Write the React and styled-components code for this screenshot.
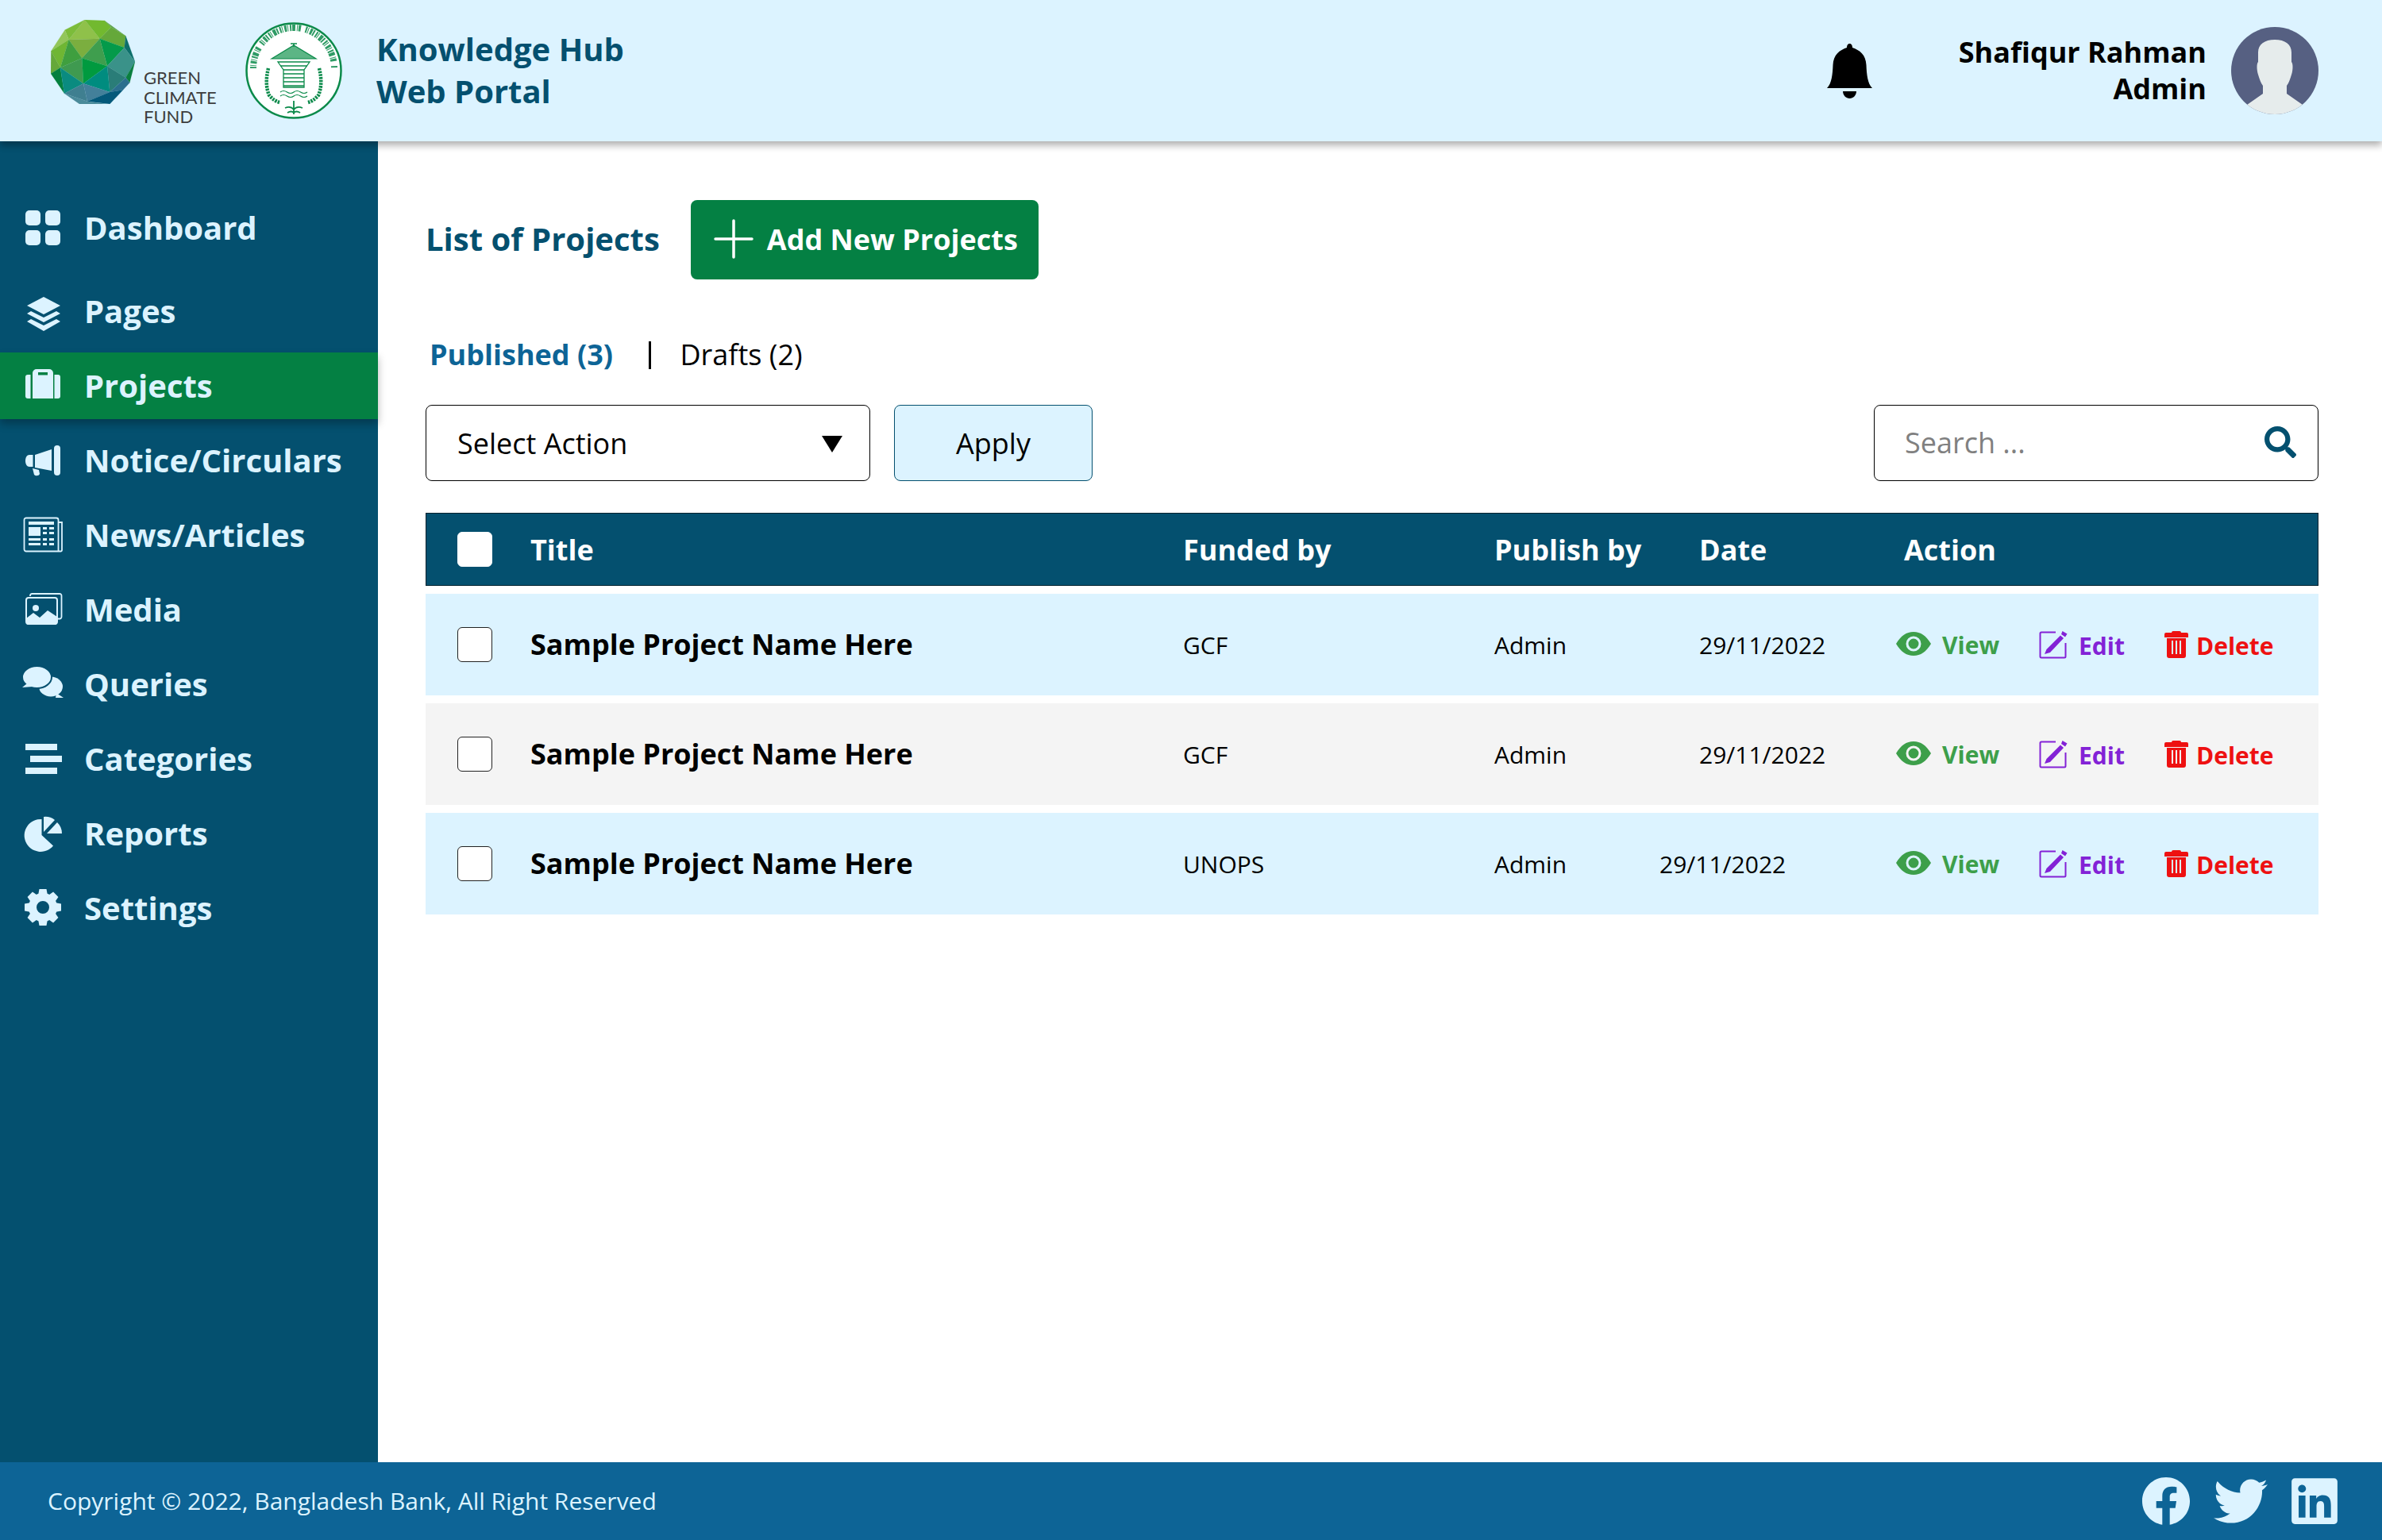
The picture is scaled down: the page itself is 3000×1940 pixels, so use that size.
import React from "react";
import styled, { createGlobalStyle } from "styled-components";
import { FaFacebook, FaTwitter, FaLinkedin, FaSearch } from "react-icons/fa";

const NAVY = "#04506f";
const PALE = "#dcf3ff";
const GREEN = "#048043";

const GlobalStyle = createGlobalStyle`
	html, body {
		margin: 0;
		padding: 0;
		background: #fff;
		font-family: "Open Sans", "Noto Sans", sans-serif;
	}
	* {
		box-sizing: border-box;
	}
`;

const Page = styled.div`
	display: grid;
	grid-template-columns: 476px 1fr;
	grid-template-rows: 178px 1fr 98px;
	width: 3000px;
	height: 1940px;
	overflow: hidden;
`;

const Header = styled.header`
	grid-column: 1 / 3;
	display: flex;
	align-items: center;
	padding: 0 80px 0 0;
	background: ${PALE};
	box-shadow: 0 5px 9px rgba(0, 0, 0, 0.32);
	position: relative;
	z-index: 3;
`;

const Glyph = styled.svg`
	flex: none;
`;

const GcfLogo = styled.div`
	display: flex;
	width: 241px;
	height: 178px;
	margin-left: 64px;
	padding-top: 25px;
`;

const GcfText = styled.div`
	margin: 61px 0 0 11px;
	font-family: Lato, sans-serif;
	font-size: 22px;
	line-height: 24.5px;
	color: #3d3d3d;
`;

const PortalName = styled.div`
	margin: -2px 0 0 43px;
	font-size: 40px;
	font-weight: 700;
	line-height: 53px;
	color: ${NAVY};
`;

const Emblem = styled.svg`
	width: 122px;
	height: 122px;
	margin-left: 4px;
	flex: none;
`;

const UserArea = styled.div`
	display: flex;
	align-items: center;
	margin-left: auto;
`;

const UserText = styled.div`
	margin: 0 31px 0 109px;
	text-align: right;
	font-size: 36px;
	font-weight: 700;
	line-height: 46px;
	color: #000;
`;

const Sidebar = styled.nav`
	display: flex;
	flex-direction: column;
	gap: 10px;
	padding-top: 66px;
	background: ${NAVY};
`;

const NavItem = styled.div`
	display: flex;
	align-items: center;
	gap: 26px;
	height: 84px;
	padding: 0 0 2px 28px;
	font-size: 40px;
	font-weight: 700;
	color: ${PALE};
	background: ${(p) => (p.$active ? GREEN : "transparent")};
	box-shadow: ${(p) => (p.$active ? "0 6px 10px rgba(0, 0, 0, 0.28)" : "none")};
	&:first-child {
		margin-bottom: 12px;
		padding-bottom: 0;
	}
`;

const NavIcon = styled.svg`
	width: 52px;
	height: 52px;
	flex: none;
	fill: ${PALE};
`;

const Main = styled.main`
	padding: 74px 80px 0 60px;
`;

const TitleRow = styled.div`
	display: flex;
	align-items: center;
	gap: 39px;
`;

const Title = styled.h1`
	margin: -3px 0 0;
	font-size: 40px;
	font-weight: 700;
	color: ${NAVY};
`;

const AddButton = styled.button`
	display: flex;
	align-items: center;
	gap: 17px;
	width: 438px;
	height: 100px;
	padding: 0 0 2px 29px;
	border: 0;
	border-radius: 8px;
	background: ${GREEN};
	color: #fff;
	font-family: inherit;
	font-size: 36px;
	font-weight: 700;
`;

const Tabs = styled.div`
	display: flex;
	align-items: center;
	height: 36px;
	margin: 76px 0 46px 5px;
	font-size: 36px;
`;

const Tab = styled.span`
	color: ${(p) => (p.$active ? "#0d6496" : "#000")};
	font-weight: ${(p) => (p.$active ? 700 : 400)};
`;

const TabDivider = styled.i`
	width: 3.5px;
	height: 35px;
	margin: 2px 36px 0 45px;
	background: #000;
`;

const Toolbar = styled.div`
	display: flex;
	align-items: stretch;
	height: 96px;
	margin-bottom: 40px;
`;

const SelectBox = styled.div`
	display: flex;
	align-items: center;
	justify-content: space-between;
	width: 560px;
	padding: 0 34px 0 39px;
	border: 1px solid #000;
	border-radius: 8px;
	font-size: 36px;
	color: #000;
`;

const Caret = styled.i`
	width: 0;
	height: 0;
	margin-top: 2px;
	border-left: 13px solid transparent;
	border-right: 13px solid transparent;
	border-top: 21px solid #000;
`;

const ApplyButton = styled.button`
	width: 250px;
	margin-left: 30px;
	border: 1px solid ${NAVY};
	border-radius: 8px;
	background: ${PALE};
	color: #000;
	font-family: inherit;
	font-size: 36px;
`;

const SearchBox = styled.div`
	display: flex;
	align-items: center;
	justify-content: space-between;
	width: 560px;
	margin-left: auto;
	padding: 0 27px 2px 38px;
	border: 1px solid #000;
	border-radius: 8px;
	font-size: 36px;
	color: #808080;
	svg {
		width: 40px;
		height: 40px;
		color: ${NAVY};
	}
`;

const Columns = styled.div`
	display: grid;
	grid-template-columns: 132px 822px 392px 258px 248px 1fr;
	align-items: center;
`;

const HeadRow = styled(Columns)`
	height: 92px;
	margin-bottom: 10px;
	background: ${NAVY};
	box-shadow: inset 0 0 0 1px #01212e;
	color: #fff;
	font-size: 36px;
	font-weight: 700;
`;

const Row = styled(Columns)`
	height: 128px;
	margin-bottom: 10px;
	background: ${(p) => p.$bg};
	color: #000;
	font-size: 30px;
`;

const CheckCell = styled.div`
	padding-left: 40px;
`;

const Check = styled.span`
	display: block;
	width: 44px;
	height: 44px;
	border: 1.5px solid ${(p) => (p.$solid ? "#fff" : "#222")};
	border-radius: 6px;
	background: #fff;
`;

const RowTitle = styled.div`
	margin-top: -2px;
	font-size: 36px;
	font-weight: 700;
`;

const DateCell = styled.div`
	margin-left: ${(p) => (p.$shift ? "-50px" : "0")};
`;

const ActionHead = styled.div`
	margin-left: 10px;
`;

const Actions = styled.div`
	display: grid;
	grid-template-columns: 180px 158px auto;
`;

const ActionLink = styled.div`
	display: flex;
	align-items: center;
	gap: ${(p) => p.$gap}px;
	margin-top: ${(p) => p.$lift}px;
	color: ${(p) => p.$color};
	font-size: 30px;
	font-weight: 700;
	svg {
		flex: none;
		margin-top: -3px;
		fill: ${(p) => p.$color};
	}
`;

const Footer = styled.footer`
	grid-column: 1 / 3;
	display: flex;
	align-items: center;
	padding: 0 52px 0 60px;
	background: #0d6496;
	color: ${PALE};
	font-size: 30px;
`;

const Copyright = styled.span`
	margin-top: -2px;
`;

const Social = styled.div`
	display: flex;
	align-items: center;
	gap: 29px;
	margin-left: auto;
	font-size: 62px;
	line-height: 0;
	svg:nth-child(2) {
		font-size: 68px;
	}
	svg:nth-child(3) {
		font-size: 66px;
		margin-left: -3px;
	}
`;

const facets = [
	["205,47 262,118 145,122", "#8fc14a"],
	["130,85 205,47 145,122", "#7cbc3a"],
	["130,85 145,122 78,165", "#93c65a"],
	["205,47 280,50 305,75 262,118", "#72b92f"],
	["280,50 360,108 305,75", "#5fa34d"],
	["305,75 360,108 355,152 262,118", "#65a83a"],
	["145,122 262,118 195,192", "#7bae3f"],
	["145,122 78,165 113,228", "#6fb633"],
	["145,122 195,192 113,228", "#3f9f3f"],
	["262,118 355,152 290,222", "#049a4a"],
	["262,118 290,222 195,192", "#3f9e4e"],
	["360,108 395,205 355,152", "#0d6f6b"],
	["355,152 395,205 360,265 290,222", "#3a9289"],
	["78,165 113,228 77,250", "#65a83a"],
	["77,250 113,228 128,325", "#04803f"],
	["113,228 195,192 200,288", "#3f9a50"],
	["195,192 290,222 200,288", "#009a3f"],
	["395,205 375,285 360,265", "#0a7f3f"],
	["290,222 360,265 300,320", "#2a7d78"],
	["200,288 290,222 300,320", "#008c7f"],
	["113,228 200,288 128,325", "#0a8b80"],
	["128,325 200,288 215,355", "#3f7f90"],
	["200,288 300,320 215,355", "#43809a"],
	["360,265 375,285 350,312 300,320", "#2b6f8e"],
	["215,355 300,320 350,312 300,365", "#04597a"],
	["128,325 215,355 290,365 185,365", "#4a8a9a"],
];

const GcfMark = () => (
	<Glyph width="106" height="106" viewBox="77 47 318 318">
		{facets.map(([points, color]) => (
			<polygon key={points} points={points} fill={color} stroke={color} strokeWidth="0.5" />
		))}
	</Glyph>
);

const BankEmblem = () => (
	<Emblem viewBox="0 0 122 122">
		<circle cx="61" cy="61" r="59.5" fill="#fff" stroke="#0b8a4a" strokeWidth="2.5" />
		<path d="M10 58 A51 51 0 0 1 112 58" fill="none" stroke="#0b8a4a" strokeWidth="8" strokeDasharray="2 1 1 2 3 1 1 2 2 1 4 2 1 1 3 6 2 1 1 2 3 1 2 2 2 1 1 2 4 1 2 2" opacity="0.85" />
		<g fill="none" stroke="#0b8a4a">
			<path d="M33 46 L61 29 L89 46 Z" strokeWidth="1.2" fill="#5cb585" />
			<path d="M57 27 h8 M61 27 v4" strokeWidth="1.6" />
			<path d="M41 50 H81 L74 60 V82 H48 V60 Z" strokeWidth="1.3" />
			<path d="M44 55 H78 M48 60 H74 M48 65 H74 M48 70 H74 M48 75 H74 M48 80 H74" strokeWidth="1.7" />
			<path d="M44 88 q4 -3 8.500 0 t8.500 0 t8.500 0 t8.500 0 M44 93 q4 -3 8.500 0 t8.500 0 t8.500 0 t8.500 0" strokeWidth="1.200" />
			<path d="M29 58 q-5 20 1 34 q6 7 13 9 M93 58 q5 20 -1 34 q-6 7 -13 9" strokeWidth="4.500" strokeDasharray="2.500 1.200" />
			<path d="M61 99 v17 M50 108 q7 -3 11 2 q4 -5 11 -2 M53 114 q5 -3 8 0 q3 -3 8 0" strokeWidth="1.800" />
		</g>
	</Emblem>
);

const Bell = () => (
	<Glyph width="57" height="69" viewBox="0 0 57 69" fill="#000">
		<path d="M28.5 0 C31 0 32 2.5 32 5 C41 8 49 14 49.500 27 C50 39 51 50 57 56 H0 C6 50 7 39 7.500 27 C8 14 16 8 25 5 C25 2.500 26 0 28.500 0 Z" />
		<path d="M20 60 H37 C37 65 33 69 28.500 69 C24 69 20 65 20 60 Z" />
	</Glyph>
);

const Avatar = () => (
	<Glyph width="110" height="110" viewBox="0 0 110 110">
		<clipPath id="avatar-clip">
			<circle cx="55" cy="55" r="55" />
		</clipPath>
		<g clipPath="url(#avatar-clip)">
			<rect width="110" height="110" fill="#566082" />
			<path d="M34 44 V32 C34 22 42 16 55 16 C68 16 76 22 76 32 V44 C78 46 78 54 76 60 C74 66 73 70 70 74 V84 L90 98 V110 H20 V98 L40 84 V74 C37 70 36 66 34 60 C32 54 32 46 34 44 Z" fill="#e6ecec" />
		</g>
	</Glyph>
);

const IconDashboard = () => (
	<NavIcon viewBox="0 0 52 52">
		<rect x="4" y="5" width="19" height="19" rx="5" />
		<rect x="29" y="5" width="19" height="19" rx="5" />
		<rect x="4" y="30" width="19" height="19" rx="5" />
		<rect x="29" y="30" width="19" height="19" rx="5" />
	</NavIcon>
);

const IconPages = () => (
	<NavIcon viewBox="0 0 52 52">
		<path d="M27 9 L48 20 L27 31 L6 20 Z" />
		<path d="M6 30 L11 27 L27 35 L43 27 L48 30 L27 41 Z" />
		<path d="M6 40 L11 37 L27 45 L43 37 L48 40 L27 52 Z" />
	</NavIcon>
);

const IconProjects = () => (
	<NavIcon viewBox="0 0 52 52">
		<path d="M4 16 a3 3 0 0 1 3 -3 h3.500 v30 h-3.500 a3 3 0 0 1 -3 -3 Z" />
		<path d="M40.500 13 h4.500 a3 3 0 0 1 3 3 v24 a3 3 0 0 1 -3 3 h-4.500 Z" />
		<path fillRule="evenodd" d="M13 11 a5 5 0 0 1 5 -5 h16 a5 5 0 0 1 5 5 v32 h-26 Z M20 10 v3.500 h12 v-3.500 Z" />
	</NavIcon>
);

const IconNotice = () => (
	<NavIcon viewBox="0 0 52 52">
		<rect x="40" y="8" width="8" height="38" rx="4" />
		<path d="M37 13 V40 L16 36 V20 Z" />
		<path d="M13.500 20 V35 H9 C6 35 4 32 4 27.500 C4 23 6 20 9 20 Z" />
		<path d="M13 37 L21 39 L22 44 C21 46.500 17 47 15 45 Z" />
	</NavIcon>
);

const IconNews = () => (
	<NavIcon viewBox="0 0 52 52">
		<path d="M46 11 H50 V46 A1.500 1.500 0 0 1 48.500 47.500 H5 A2.500 2.500 0 0 1 2.500 45 V8 A2.500 2.500 0 0 1 5 5.500 H43 A2.500 2.500 0 0 1 45.500 8 V47" fill="none" stroke="#dcf3ff" strokeWidth="1.800" />
		<rect x="8" y="10" width="32" height="4" />
		<rect x="8" y="17" width="15" height="11" />
		<path d="M26 17 h5 v3 h-5 z M34 17 h6 v3 h-6 z M26 23 h5 v3 h-5 z M34 23 h6 v3 h-6 z M8 31 h15 v3 h-15 z M26 31 h5 v3 h-5 z M34 31 h6 v3 h-6 z M8 37 h15 v3 h-15 z M26 37 h5 v3 h-5 z M34 37 h6 v3 h-6 z" />
	</NavIcon>
);

const IconMedia = () => (
	<NavIcon viewBox="0 0 52 52">
		<path d="M10 10 V9 A2.500 2.500 0 0 1 12.500 7 H47 A2.500 2.500 0 0 1 49.500 9.500 V36 A2.500 2.500 0 0 1 47 38.500 H44" fill="none" stroke="#dcf3ff" strokeWidth="1.800" />
		<rect x="5" y="12" width="39" height="33" rx="3" fill="none" stroke="#dcf3ff" strokeWidth="2" />
		<circle cx="17" cy="25" r="4" />
		<path d="M5 38 L14 31 L22 37 L32 28 L44 36 V43 A3 3 0 0 1 41 46 H8 A3 3 0 0 1 5 43 Z" />
	</NavIcon>
);

const IconQueries = () => (
	<NavIcon viewBox="0 0 52 52">
		<ellipse cx="36" cy="30" rx="15" ry="12.500" />
		<path d="M43 38 L52 44 H42 Z" />
		<ellipse cx="18.500" cy="18" rx="18.500" ry="14" stroke={NAVY} strokeWidth="2" />
		<path d="M6 26 L0 31 L13 30 Z" />
	</NavIcon>
);

const IconCategories = () => (
	<NavIcon viewBox="0 0 52 52">
		<rect x="4" y="8" width="40" height="8" />
		<rect x="10" y="23" width="40" height="8" />
		<rect x="4" y="38" width="40" height="8" />
	</NavIcon>
);

const IconReports = () => (
	<NavIcon viewBox="0 0 52 52">
		<path d="M24 9 V29 L38.500 42.500 A20.500 20.500 0 1 1 24 9 Z" transform="translate(0.500 0)" />
		<path d="M27 6 A19 19 0 0 1 41 10 L27 25 Z" />
		<path d="M44 13 A19 19 0 0 1 50 27 H31 Z" />
	</NavIcon>
);

const IconSettings = () => (
	<NavIcon viewBox="0 0 52 52">
		<circle cx="26" cy="26" r="13" fill="none" stroke="#dcf3ff" strokeWidth="10" />
		{[0, 45, 90, 135, 180, 225, 270, 315].map((deg) => (
			<path key={deg} d="M21.500 3 H30.500 L32 11 H20 Z" transform={`rotate(${deg} 26 26)`} />
		))}
	</NavIcon>
);

const EyeIcon = () => (
	<svg width="44" height="30" viewBox="0 0 44 30">
		<path
			fillRule="evenodd"
			d="M0 15 C6 5 13 0 22 0 C31 0 38 5 44 15 C38 25 31 30 22 30 C13 30 6 25 0 15 Z M22 5.500 A9.500 9.500 0 1 0 22 24.500 A9.500 9.500 0 1 0 22 5.500 Z M22 8.500 A6.500 6.500 0 1 1 22 21.500 A6.500 6.500 0 1 1 22 8.500 Z"
		/>
	</svg>
);

const EditIcon = () => (
	<svg width="36" height="36" viewBox="0 0 36 36">
		<path d="M21 2.500 H3 A1.500 1.500 0 0 0 1.500 4 V33 A1.500 1.500 0 0 0 3 34.500 H32 A1.500 1.500 0 0 0 33.500 33 V16" fill="none" stroke="#8322d6" strokeWidth="2" />
		<path d="M27 6.500 L31 10 L14 28 L7 30 L9.500 24 Z" />
		<path d="M29.500 1 L35.500 4.500 L33 8.500 L28 5 Z" />
	</svg>
);

const TrashIcon = () => (
	<svg width="30" height="34" viewBox="0 0 30 34">
		<path d="M11 0 H19 A2 2 0 0 1 21 2 H28 A2 2 0 0 1 30 4 V8 H0 V4 A2 2 0 0 1 2 2 H9 A2 2 0 0 1 11 0 Z" />
		<path
			fillRule="evenodd"
			d="M3 9 H27 V31 A3 3 0 0 1 24 34 H6 A3 3 0 0 1 3 31 Z M9 12 V29 H11 V12 Z M14 12 V29 H16 V12 Z M19 12 V29 H21 V12 Z"
		/>
	</svg>
);

const PlusIcon = () => (
	<Glyph width="50" height="50" viewBox="0 0 50 50" stroke="#fff" strokeWidth="3.500" strokeLinecap="round">
		<path d="M25 2 V48 M2 25 H48" />
	</Glyph>
);

const navItems = [
	["Dashboard", IconDashboard],
	["Pages", IconPages],
	["Projects", IconProjects],
	["Notice/Circulars", IconNotice],
	["News/Articles", IconNews],
	["Media", IconMedia],
	["Queries", IconQueries],
	["Categories", IconCategories],
	["Reports", IconReports],
	["Settings", IconSettings],
];

const rows = [
	{ funder: "GCF", bg: PALE },
	{ funder: "GCF", bg: "#f4f4f4" },
	{ funder: "UNOPS", bg: PALE, shift: true },
];

export default function App() {
	return (
		<Page>
			<GlobalStyle />
			<Header>
				<GcfLogo>
					<GcfMark />
					<GcfText>
						GREEN
						<br />
						CLIMATE
						<br />
						FUND
					</GcfText>
				</GcfLogo>
				<BankEmblem />
				<PortalName>
					Knowledge Hub
					<br />
					Web Portal
				</PortalName>
				<UserArea>
					<Bell />
					<UserText>
						Shafiqur Rahman
						<br />
						Admin
					</UserText>
					<Avatar />
				</UserArea>
			</Header>
			<Sidebar>
				{navItems.map(([label, Icon]) => (
					<NavItem key={label} $active={label === "Projects"}>
						<Icon />
						{label}
					</NavItem>
				))}
			</Sidebar>
			<Main>
				<TitleRow>
					<Title>List of Projects</Title>
					<AddButton>
						<PlusIcon />
						Add New Projects
					</AddButton>
				</TitleRow>
				<Tabs>
					<Tab $active>Published (3)</Tab>
					<TabDivider />
					<Tab>Drafts (2)</Tab>
				</Tabs>
				<Toolbar>
					<SelectBox>
						Select Action
						<Caret />
					</SelectBox>
					<ApplyButton>Apply</ApplyButton>
					<SearchBox>
						Search ...
						<FaSearch />
					</SearchBox>
				</Toolbar>
				<HeadRow>
					<CheckCell>
						<Check $solid />
					</CheckCell>
					<div>Title</div>
					<div>Funded by</div>
					<div>Publish by</div>
					<div>Date</div>
					<ActionHead>Action</ActionHead>
				</HeadRow>
				{rows.map((row, i) => (
					<Row key={i} $bg={row.bg}>
						<CheckCell>
							<Check />
						</CheckCell>
						<RowTitle>Sample Project Name Here</RowTitle>
						<div>{row.funder}</div>
						<div>Admin</div>
						<DateCell $shift={row.shift}>29/11/2022</DateCell>
						<Actions>
							<ActionLink $color="#3d9f4a" $gap={14} $lift={0}>
								<EyeIcon />
								View
							</ActionLink>
							<ActionLink $color="#8322d6" $gap={14} $lift={2}>
								<EditIcon />
								Edit
							</ActionLink>
							<ActionLink $color="#ee1111" $gap={10} $lift={2}>
								<TrashIcon />
								Delete
							</ActionLink>
						</Actions>
					</Row>
				))}
			</Main>
			<Footer>
				<Copyright>Copyright © 2022, Bangladesh Bank, All Right Reserved</Copyright>
				<Social>
					<FaFacebook />
					<FaTwitter />
					<FaLinkedin />
				</Social>
			</Footer>
		</Page>
	);
}
